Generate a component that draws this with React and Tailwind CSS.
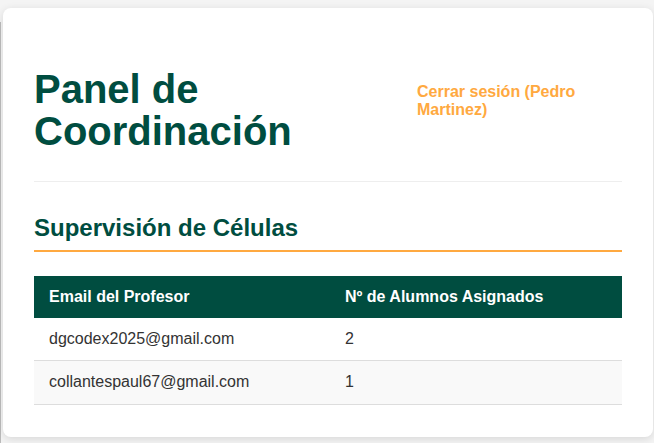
import React from "react";

const rows = [
  { email: "dgcodex2025@gmail.com", count: 2 },
  { email: "collantespaul67@gmail.com", count: 1 },
];

const App = () => {
  return (
    <div className="min-h-[443px] bg-[#f4f4f4] flex font-['Liberation_Sans',Arial,sans-serif] text-[#333]">
      {/* bit of the page behind the card */}
      <div className="w-[3px] mt-[22px] border-l border-[#bbb]" />

      <div className="w-[650px] mt-2 mb-[6px] bg-white rounded-lg shadow-[0_2px_8px_rgba(0,0,0,0.12)] p-[31px]">
        {/* Header */}
        <div className="flex items-start border-b border-[#eee]">
          <h1 className="flex-1 mt-[29px] mb-[29px] text-[40px] leading-[42px] font-bold text-[#004d40]">
            Panel de
            <br />
            Coordinación
          </h1>
          <a
            href="#"
            className="w-[205px] shrink-0 mt-[44px] text-[16px] leading-[18.4px] font-bold text-[#ffa940]"
          >
            Cerrar sesión (Pedro Martinez)
          </a>
        </div>

        {/* Section */}
        <h2 className="mt-8 pb-2 border-b-2 border-[#ffa940] text-[24px] leading-[27.6px] font-bold text-[#004d40]">
          Supervisión de Células
        </h2>

        <table className="mt-6 w-full border-collapse text-left text-[16px] leading-[18.4px]">
          <thead>
            <tr className="bg-[#004d40] text-white">
              <th className="w-[296px] px-[15px] py-3 font-bold">Email del Profesor</th>
              <th className="px-[15px] py-3 font-bold">Nº de Alumnos Asignados</th>
            </tr>
          </thead>
          <tbody>
            {rows.map((r, i) => (
              <tr
                key={r.email}
                className={`border-b border-[#ddd] ${i % 2 === 1 ? "bg-[#f9f9f9]" : "bg-white"}`}
              >
                <td className="px-[15px] py-3">{r.email}</td>
                <td className="px-[15px] py-3">{r.count}</td>
              </tr>
            ))}
          </tbody>
        </table>
      </div>
    </div>
  );
};

export default App;
